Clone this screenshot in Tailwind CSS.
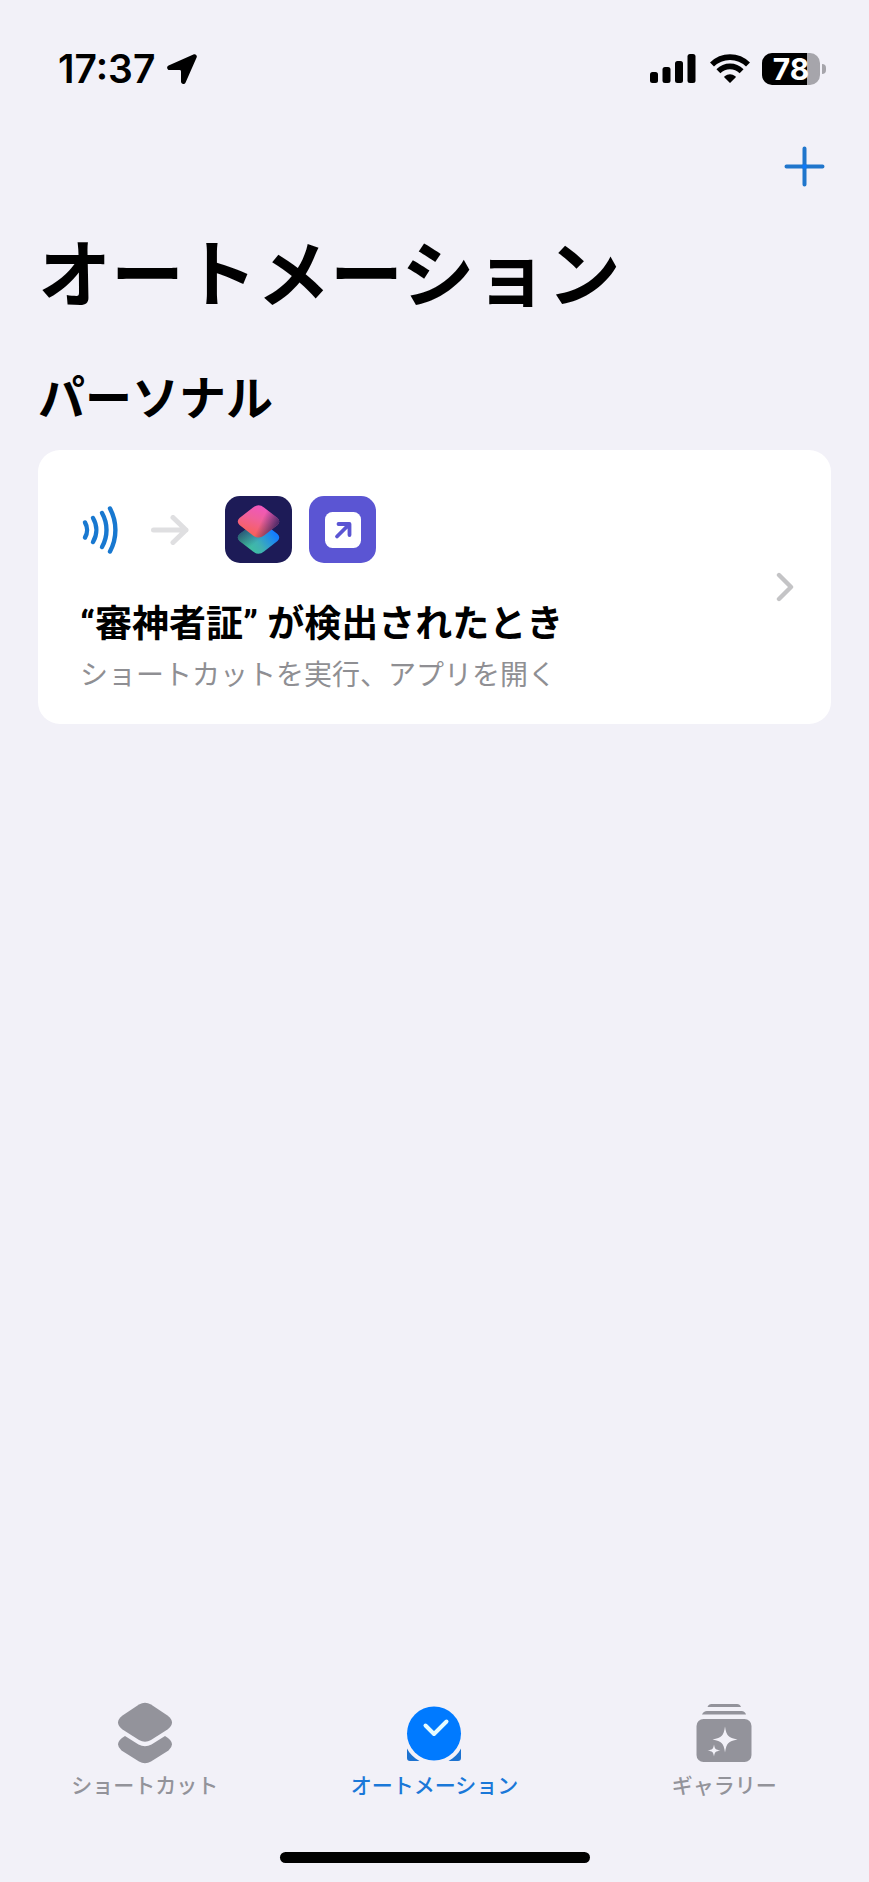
<!DOCTYPE html>
<html lang="ja">
<head>
  <meta charset="UTF-8">
  <meta name="viewport" content="width=device-width, initial-scale=1.0">
  <title>オートメーション</title>
  <script src="https://cdn.jsdelivr.net/npm/@tailwindcss/browser@4"></script>
</head>
<body class="bg-[#f2f1f8] text-black font-['Inter','Noto_Sans_CJK_JP',sans-serif]">
  <div class="min-h-screen flex flex-col">

    <!-- Status bar -->
    <div class="flex items-center justify-between pt-[49px] pl-[58px] pr-[43px] h-[88px]">
      <div class="flex items-center gap-3">
        <span class="text-[39px] leading-10 font-semibold">17:37</span>
        <svg class="w-[30px] h-[30px]" viewBox="0 0 30 30" fill="#000">
          <path d="M26.4.4 1.6 11.4C-.8 12.6-.1 16 2.5 16H12.6Q14 16 14 17.4V27.5C14 30.2 17.4 30.8 18.6 28.4L29.6 3.6C30.5 1.4 28.6-.5 26.4.4Z"/>
        </svg>
      </div>
      <div class="flex items-center">
        <svg class="w-[46px] h-[30px]" viewBox="0 0 46 30" fill="#000">
          <rect x="0" y="18" width="8" height="11" rx="2.5"/>
          <rect x="12.5" y="13" width="8" height="16" rx="2.5"/>
          <rect x="25" y="7" width="8" height="22" rx="2.5"/>
          <rect x="37.5" y="0" width="8" height="29" rx="2.5"/>
        </svg>
        <svg class="ml-3.5 w-10 h-[30px]" viewBox="0 0 40 30">
          <g fill="none" stroke="#000" stroke-width="5.6">
            <path d="M2 10.5C12 .6 28 .6 38 10.5"/>
            <path d="M8.4 17.2C15 10.7 25 10.7 31.6 17.2"/>
          </g>
          <path d="M20 29 14.2 23.2Q14 22.6 14.6 22.2C18 19.5 22 19.5 25.4 22.2Q26 22.6 25.8 23.2Z" fill="#000"/>
        </svg>
        <div class="ml-3 flex items-center gap-0.5">
          <div class="w-[58px] h-8 rounded-[10px] bg-linear-to-r from-black from-78% to-[#a6a5ab] to-78% text-white text-[30px] leading-8 font-bold text-center">78</div>
          <div class="w-1 h-[10px] rounded-r-full bg-[#a6a5ab]"></div>
        </div>
      </div>
    </div>

    <!-- Navigation bar -->
    <header class="px-[38px]">
      <div class="flex justify-end pt-[58px] pr-1.5">
        <button type="button" aria-label="新規オートメーション" class="cursor-pointer">
          <svg class="w-[41px] h-[41px]" viewBox="0 0 41 41" fill="none" stroke-width="4" stroke-linecap="round">
            <path stroke="#2076cc" d="M20.5 2.5V38.5M2.5 20.5H38.5"/>
            <path stroke="#0a7aff" stroke-linecap="butt" d="M18.5 20.5H22.5"/>
          </svg>
        </button>
      </div>
      <h1 class="mt-9 text-[73px] leading-[104px] font-bold">オートメーション</h1>
    </header>

    <!-- Personal automations -->
    <main class="grow px-[38px] pt-[35px]">
      <h2 class="text-[47px] leading-[72px] font-bold">パーソナル</h2>
      <a href="#" class="mt-4 flex items-center justify-between rounded-[22px] bg-white pl-[42px] pr-[37px]">
        <div class="pt-[46px] pb-[29px]">
          <div class="flex items-center">
            <svg class="w-[38px] h-12" viewBox="0 0 38 48" fill="none" stroke="#1878d0" stroke-width="4.4" stroke-linecap="round">
              <path d="M5 16.5C7.7 21 7.7 27 5 31.5"/>
              <path d="M13 12C17.4 19.4 17.4 28.6 13 36"/>
              <path d="M22 7C28 17.6 28 30.4 22 41"/>
              <path d="M30 2.5C37.2 16 37.2 32 30 45.5"/>
            </svg>
            <svg class="ml-[33px] w-[38px] h-[30px]" viewBox="0 0 38 30" fill="none" stroke="#dfdfe1" stroke-width="5" stroke-linecap="round" stroke-linejoin="round">
              <path d="M2.5 15H35M22 2.5 35 15 22 27.5"/>
            </svg>
            <svg class="ml-9 w-[67px] h-[67px]" viewBox="0 0 67 67">
              <defs>
                <linearGradient id="top" x1="0.7" y1="0" x2="0.3" y2="0.9">
                  <stop offset="0" stop-color="#f055c4"/>
                  <stop offset="0.5" stop-color="#f0609a"/>
                  <stop offset="1" stop-color="#f8605a"/>
                </linearGradient>
                <linearGradient id="shade" x1="0.6" y1="0.4" x2="1" y2="0.55">
                  <stop offset="0" stop-color="#1d1b57" stop-opacity="0"/>
                  <stop offset="1" stop-color="#1d1b57" stop-opacity="0.8"/>
                </linearGradient>
                <linearGradient id="bottom" x1="0.2" y1="0.8" x2="0.9" y2="0.4">
                  <stop offset="0" stop-color="#3fc09c"/>
                  <stop offset="0.4" stop-color="#3fb0b4"/>
                  <stop offset="1" stop-color="#147dff"/>
                </linearGradient>
                <linearGradient id="fade" x1="0.5" y1="0.6" x2="0.1" y2="0.2">
                  <stop offset="0" stop-color="#1d1b57" stop-opacity="0"/>
                  <stop offset="1" stop-color="#1d1b57" stop-opacity="0.7"/>
                </linearGradient>
              </defs>
              <rect width="67" height="67" rx="15" fill="#1d1b57"/>
              <path d="M29 27.5 14.5 38Q11 41.5 14.5 45L28 55.5Q33.5 60 39 55.5L52.5 45Q56 41.5 52.5 38L39 27.5Q33.5 23.5 29 27.5Z" fill="url(#bottom)"/>
              <path d="M29 27.5 14.5 38Q11 41.5 14.5 45L28 55.5Q33.5 60 39 55.5L52.5 45Q56 41.5 52.5 38L39 27.5Q33.5 23.5 29 27.5Z" fill="url(#fade)"/>
              <path d="M28 11.5 14.5 22Q11 25.5 14.5 29L28 39.5Q33.5 43.5 39 39.5L52.5 29Q56 25.5 52.5 22L39 11.5Q33.5 7 28 11.5Z" fill="url(#top)"/>
              <path d="M28 11.5 14.5 22Q11 25.5 14.5 29L28 39.5Q33.5 43.5 39 39.5L52.5 29Q56 25.5 52.5 22L39 11.5Q33.5 7 28 11.5Z" fill="url(#shade)"/>
            </svg>
            <svg class="ml-[17px] w-[67px] h-[67px]" viewBox="0 0 67 67">
              <rect width="67" height="67" rx="15" fill="#5b55d3"/>
              <rect x="16" y="16" width="36" height="36" rx="7.5" fill="#fff"/>
              <path d="M28 40.5 40 28.5M29.5 28H40.5V39" fill="none" stroke="#5b55d3" stroke-width="3.8" stroke-linecap="round" stroke-linejoin="round"/>
            </svg>
          </div>
          <p class="mt-9 font-['Roboto','Noto_Sans_CJK_JP',sans-serif] text-[37px] leading-[52px] font-bold">“審神者証” が検出されたとき</p>
          <p class="mt-1 text-[28px] leading-10 text-[#8f8f93]">ショートカットを実行、アプリを開く</p>
        </div>
        <svg class="w-[18px] h-[30px]" viewBox="0 0 18 30" fill="none" stroke="#c4c4c6" stroke-width="4.4" stroke-linecap="round" stroke-linejoin="round">
          <path d="M3 3 15 15 3 27"/>
        </svg>
      </a>
    </main>

    <!-- Tab bar -->
    <nav class="grid grid-cols-3 text-[21px] leading-8 font-medium text-[#93939a]">
      <a href="#" class="flex flex-col items-center">
        <svg class="w-14 h-16" viewBox="0 0 56 64" fill="#93939b">
          <path d="M22 3.5Q28 0 34 3.5L50.5 14.5Q59.5 21.5 50.5 28.5L34 39Q28 42.5 22 39L5.5 28.5Q-3.5 21.5 5.5 14.5Z"/>
          <path d="M8 35Q-4 42 4.5 49.5L22 60.5Q28 64 34 60.5L51.5 49.5Q60 42 48 35L34.5 43.5Q28 47 21.5 43.5Z"/>
        </svg>
        <span class="mt-[5px]">ショートカット</span>
      </a>
      <a href="#" aria-current="page" class="flex flex-col items-center text-[#1a78d8]">
        <svg class="w-14 h-16" viewBox="0 0 56 64">
          <path d="M1 47.5C3.5 52.5 8 57 13.5 60H4Q1 60 1 57ZM55 47.5C52.5 52.5 48 57 42.5 60H52Q55 60 55 57Z" fill="#1c72d0"/>
          <circle cx="28" cy="32.5" r="27" fill="#007aff"/>
          <path d="M19.5 24.5 28 33 40.5 20.5" fill="none" stroke="#e6fcff" stroke-width="4" stroke-linecap="round" stroke-linejoin="round"/>
        </svg>
        <span class="mt-[5px]">オートメーション</span>
      </a>
      <a href="#" class="flex flex-col items-center">
        <svg class="w-14 h-16" viewBox="0 0 56 64" fill="#93939b">
          <path d="M11.5 6Q12.5 3 15.5 3H41Q44 3 45 6ZM6 13.5Q7.5 10 11 10H45.5Q49 10 50 13.5Z"/>
          <rect x="0.5" y="18" width="55" height="43" rx="7"/>
          <path fill="#f2f1f8" d="M29 25.5C30.5 35 32 36.5 41.5 38.5C32 40.5 30.5 42 29 51.5C27.5 42 26 40.5 16.5 38.5C26 36.5 27.5 35 29 25.5ZM18 43.5C18.8 48 19.5 48.7 24.5 49.5C19.5 50.3 18.8 51 18 55.5C17.2 51 16.5 50.3 11.5 49.5C16.5 48.7 17.2 48 18 43.5Z"/>
        </svg>
        <span class="mt-[5px]">ギャラリー</span>
      </a>
    </nav>

    <!-- Home indicator -->
    <div class="flex justify-center pt-[50px] pb-[19px]">
      <div class="w-[310px] h-[11px] rounded-full bg-black"></div>
    </div>
  </div>
</body>
</html>
